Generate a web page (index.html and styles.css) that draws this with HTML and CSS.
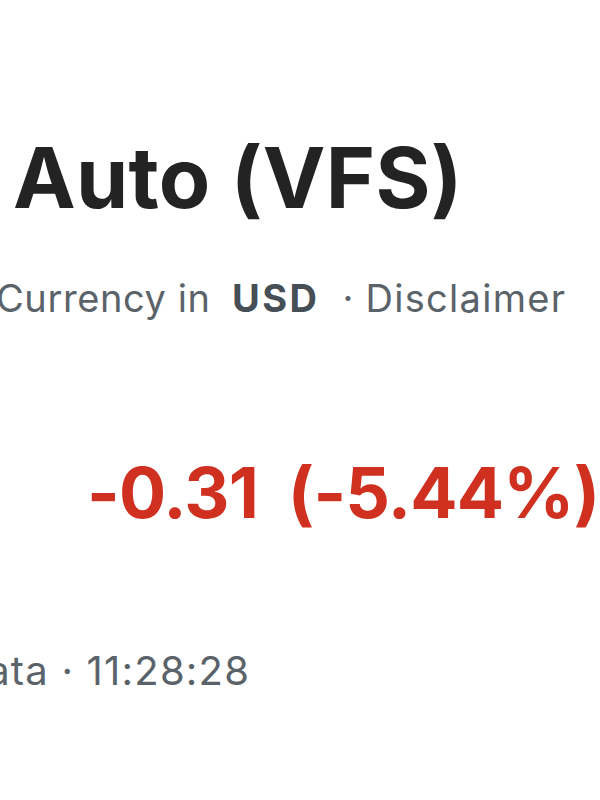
FILE: index.html
```html
<!DOCTYPE html>
<html>
<head>
<meta charset="utf-8">
<link rel="stylesheet" href="styles.css">
</head>
<body>
<main class="quote">
  <h1 class="title"><span class="cut cut-title"><span class="pre">VinFast </span></span>Auto (VFS)</h1>
  <p class="meta"><span class="cut cut-meta"><span class="pre">NasdaqGS - Nasdaq Real Time Price. </span></span>Currency in <b class="cur">USD</b> · <span class="disc">Disclaimer</span></p>
  <div class="change">-0.31 (-5.44%)</div>
  <p class="time"><span class="cut cut-time"><span class="pre">At close · Real-time data</span></span> · 11:28:28</p>
</main>
</body>
</html>
```

FILE: styles.css
```css
html, body {
  margin: 0;
  padding: 0;
  background: #ffffff;
  overflow: hidden;
}
body {
  width: 600px;
  height: 800px;
  font-family: Inter, "Noto Sans", sans-serif;
}
.quote {
  display: flex;
  flex-direction: column;
  white-space: nowrap;
}
.cut {
  display: inline-flex;
  justify-content: flex-end;
  overflow: visible;
  vertical-align: baseline;
}
.pre { white-space: pre; }
.cut-title { width: 13px; }
.cut-meta { width: 0; }
.cut-time { width: 49px; }

.title {
  margin: 128px 0 0 0;
  font-size: 84px;
  line-height: 100px;
  font-weight: 700;
  color: #232323;
  letter-spacing: 0.3px;
}
.meta {
  margin: 40px 0 0 -4px;
  font-size: 38px;
  line-height: 60px;
  color: #5b636a;
  letter-spacing: 0.6px;
}
.cur {
  color: #464e56;
  font-weight: 700;
  letter-spacing: 2.4px;
  margin: 0 12px 0 10px;
}
.disc {
  letter-spacing: 1.3px;
}
.change {
  margin: 120px 0 0 87px;
  font-size: 70px;
  line-height: 90px;
  font-weight: 700;
  color: #cf3020;
  word-spacing: 14px;
  letter-spacing: -0.8px;
}
.time {
  margin: 108px 0 0 0;
  font-size: 40px;
  line-height: 50px;
  color: #5b636a;
  letter-spacing: 1.2px;
}
```
